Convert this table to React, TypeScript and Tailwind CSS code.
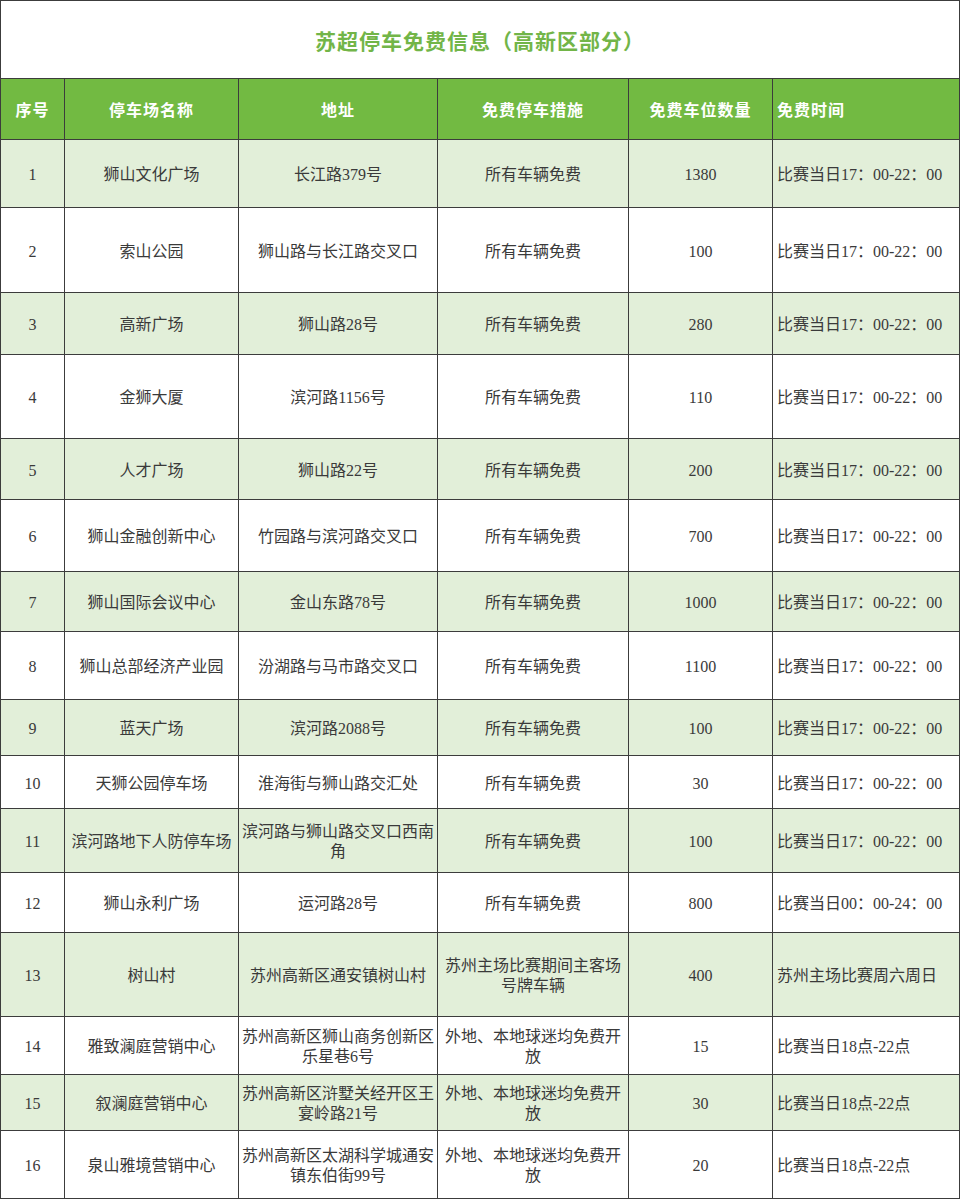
import React from 'react';

type Row = {
  no: string;
  name: string;
  address: string;
  measure: string;
  spaces: string;
  time: string;
};

const rows: Row[] = [
  { no: '1', name: '狮山文化广场', address: '长江路379号', measure: '所有车辆免费', spaces: '1380', time: '比赛当日17：00-22：00' },
  { no: '2', name: '索山公园', address: '狮山路与长江路交叉口', measure: '所有车辆免费', spaces: '100', time: '比赛当日17：00-22：00' },
  { no: '3', name: '高新广场', address: '狮山路28号', measure: '所有车辆免费', spaces: '280', time: '比赛当日17：00-22：00' },
  { no: '4', name: '金狮大厦', address: '滨河路1156号', measure: '所有车辆免费', spaces: '110', time: '比赛当日17：00-22：00' },
  { no: '5', name: '人才广场', address: '狮山路22号', measure: '所有车辆免费', spaces: '200', time: '比赛当日17：00-22：00' },
  { no: '6', name: '狮山金融创新中心', address: '竹园路与滨河路交叉口', measure: '所有车辆免费', spaces: '700', time: '比赛当日17：00-22：00' },
  { no: '7', name: '狮山国际会议中心', address: '金山东路78号', measure: '所有车辆免费', spaces: '1000', time: '比赛当日17：00-22：00' },
  { no: '8', name: '狮山总部经济产业园', address: '汾湖路与马市路交叉口', measure: '所有车辆免费', spaces: '1100', time: '比赛当日17：00-22：00' },
  { no: '9', name: '蓝天广场', address: '滨河路2088号', measure: '所有车辆免费', spaces: '100', time: '比赛当日17：00-22：00' },
  { no: '10', name: '天狮公园停车场', address: '淮海街与狮山路交汇处', measure: '所有车辆免费', spaces: '30', time: '比赛当日17：00-22：00' },
  { no: '11', name: '滨河路地下人防停车场', address: '滨河路与狮山路交叉口西南角', measure: '所有车辆免费', spaces: '100', time: '比赛当日17：00-22：00' },
  { no: '12', name: '狮山永利广场', address: '运河路28号', measure: '所有车辆免费', spaces: '800', time: '比赛当日00：00-24：00' },
  { no: '13', name: '树山村', address: '苏州高新区通安镇树山村', measure: '苏州主场比赛期间主客场号牌车辆', spaces: '400', time: '苏州主场比赛周六周日' },
  { no: '14', name: '雅致澜庭营销中心', address: '苏州高新区狮山商务创新区乐星巷6号', measure: '外地、本地球迷均免费开放', spaces: '15', time: '比赛当日18点-22点' },
  { no: '15', name: '叙澜庭营销中心', address: '苏州高新区浒墅关经开区王宴岭路21号', measure: '外地、本地球迷均免费开放', spaces: '30', time: '比赛当日18点-22点' },
  { no: '16', name: '泉山雅境营销中心', address: '苏州高新区太湖科学城通安镇东伯街99号', measure: '外地、本地球迷均免费开放', spaces: '20', time: '比赛当日18点-22点' },
];

const headers = ['序号', '停车场名称', '地址', '免费停车措施', '免费车位数量', '免费时间'];

export default function App() {
  return (
    <div
      className="w-[960px] h-[1200px] bg-white"
      style={{ fontFamily: '"Liberation Serif", "Noto Sans CJK SC", serif' }}
    >
      {/* Sheet grid: dark background shows through the 1px gaps as cell borders */}
      <div className="grid grid-cols-[63px_173px_198px_190px_143px_186px] grid-rows-[77px_60px_67px_84px_61px_83px_60px_71px_59px_67px_55px_52px_63px_59px_83px_57px_55px_67px] gap-px p-px bg-[#3c3c3c]">
        {/* Title */}
        <div className="col-span-6 bg-white flex items-center justify-center pt-[7px] text-[21px] tracking-[1px] font-semibold text-[#72b548]">
          苏超停车免费信息（高新区部分）
        </div>

        {/* Header */}
        {headers.map((h, i) => (
          <div
            key={h}
            className={`bg-[#72ba42] text-white text-[16px] tracking-[1px] font-bold flex items-center pt-[4px] ${
              i === 5 ? 'justify-start px-[4px]' : 'justify-center'
            }`}
          >
            {h}
          </div>
        ))}

        {/* Body */}
        {rows.map((r, idx) => {
          const bg = idx % 2 === 0 ? 'bg-[#e2efd9]' : 'bg-white';
          const cell = `${bg} flex items-center justify-center text-center text-[16px] leading-[20px] text-[#3a3a3a] px-[3px] pt-[3px]`;
          return (
            <React.Fragment key={r.no}>
              <div className={cell}>{r.no}</div>
              <div className={cell}>{r.name}</div>
              <div className={cell}>{r.address}</div>
              <div className={cell}>{r.measure}</div>
              <div className={cell}>{r.spaces}</div>
              <div className={`${bg} flex items-center justify-start text-[16px] leading-[20px] text-[#3a3a3a] px-[4px] pt-[3px]`}>
                {r.time}
              </div>
            </React.Fragment>
          );
        })}
      </div>
    </div>
  );
}
